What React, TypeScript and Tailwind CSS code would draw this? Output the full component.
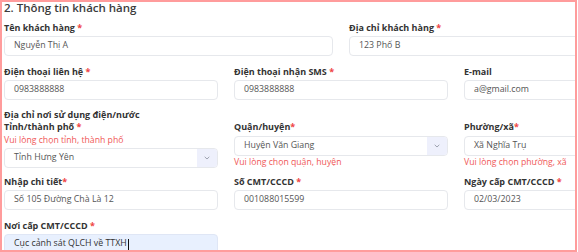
import React from "react";

const font = { fontFamily: '"Open Sans", "Noto Sans", sans-serif' };

function Label({ text, req = true, star = " *" }: { text: string; req?: boolean; star?: string }) {
  return (
    <div className="h-[12px] leading-[12px] text-[9px] font-bold text-[#333] whitespace-nowrap">
      {text}
      {req && <span className="text-[#ef4444]">{star}</span>}
    </div>
  );
}

function Input({ value, className = "" }: { value: string; className?: string }) {
  return (
    <div
      className={
        "h-[20px] rounded-[4px] border border-[#e6e8ec] bg-white pl-[9px] flex items-center text-[8.8px] text-[#555] whitespace-nowrap overflow-hidden " +
        className
      }
    >
      {value}
    </div>
  );
}

function Select({ value }: { value: string }) {
  return (
    <div className="h-[20px] rounded-[4px] border border-[#e6e8ec] bg-white flex items-stretch text-[8.8px] text-[#555] whitespace-nowrap overflow-hidden">
      <div className="flex-1 pl-[9px] flex items-center">{value}</div>
      <div className="w-[20px] bg-[#eef0fc] flex items-center justify-center">
        <svg width="6" height="4" viewBox="0 0 6 4" fill="none">
          <path d="M0.7 0.8 L3 3 L5.3 0.8" stroke="#8a8f9c" strokeWidth="0.8" />
        </svg>
      </div>
    </div>
  );
}

function Err({ text, className = "" }: { text: string; className?: string }) {
  return (
    <div className={"h-[12px] leading-[12px] text-[8.7px] text-[#f05858] whitespace-nowrap " + className}>
      {text}
    </div>
  );
}

export default function App() {
  return (
    <div style={font} className="w-[578px] h-[252px] bg-white">
      <div className="w-[577px] h-[252px] border-2 border-[#ff9c9c] overflow-hidden pl-[2px]">
        <div className="w-[674px] flex flex-col">
          <div className="leading-[15px] -mt-[2px] text-[11.5px] font-semibold text-[#3c3c3c] whitespace-nowrap">
            2. Thông tin khách hàng
          </div>

          <div className="mt-[7px] grid grid-cols-2 gap-x-[16px]">
            <div className="flex flex-col">
              <Label text="Tên khách hàng" />
              <Input value="Nguyễn Thị A" className="mt-[2px]" />
            </div>
            <div className="flex flex-col">
              <Label text="Địa chỉ khách hàng" />
              <Input value="123 Phố B" className="mt-[2px]" />
            </div>
          </div>

          <div className="mt-[10px] grid grid-cols-3 gap-x-[16px]">
            <div className="flex flex-col">
              <Label text="Điện thoại liên hệ" />
              <Input value="0983888888" className="mt-[2px]" />
            </div>
            <div className="flex flex-col">
              <Label text="Điện thoại nhận SMS" />
              <Input value="0983888888" className="mt-[2px]" />
            </div>
            <div className="flex flex-col">
              <Label text="E-mail" req={false} />
              <Input value="a@gmail.com" className="mt-[2px]" />
            </div>
          </div>

          <div className="mt-[9px]">
            <Label text="Địa chỉ nơi sử dụng điện/nước" req={false} />
          </div>

          <div className="grid grid-cols-3 gap-x-[16px]">
            <div className="flex flex-col">
              <Label text="Tỉnh/thành phố" />
              <Err text="Vui lòng chọn tỉnh, thành phố" className="mt-[1px]" />
              <div className="mt-[2px]">
                <Select value="Tỉnh Hưng Yên" />
              </div>
            </div>
            <div className="flex flex-col">
              <Label text="Quận/huyện" star="*" />
              <div className="mt-[3px]">
                <Select value="Huyện Văn Giang" />
              </div>
              <Err text="Vui lòng chọn quận, huyện" />
            </div>
            <div className="flex flex-col">
              <Label text="Phường/xã" star="*" />
              <div className="mt-[3px]">
                <Select value="Xã Nghĩa Trụ" />
              </div>
              <Err text="Vui lòng chọn phường, xã" />
            </div>
          </div>

          <div className="mt-[8px] grid grid-cols-3 gap-x-[16px]">
            <div className="flex flex-col">
              <Label text="Nhập chi tiết" star="*" />
              <Input value="Số 105 Đường Chà Là 12" className="mt-[2px]" />
            </div>
            <div className="flex flex-col">
              <Label text="Số CMT/CCCD" />
              <Input value="001088015599" className="mt-[2px]" />
            </div>
            <div className="flex flex-col">
              <Label text="Ngày cấp CMT/CCCD" />
              <Input value="02/03/2023" className="mt-[2px]" />
            </div>
          </div>

          <div className="mt-[10px] grid grid-cols-3 gap-x-[16px]">
            <div className="flex flex-col">
              <Label text="Nơi cấp CMT/CCCD" />
              <div className="mt-[2px] h-[20px] rounded-[4px] border border-[#dfe6f5] bg-[#e8f0fe] pl-[9px] flex items-center text-[8.8px] text-[#333] whitespace-nowrap">
                Cục cảnh sát QLCH về TTXH
                <span className="inline-block w-[1px] h-[11px] bg-[#111] ml-[1px]" />
              </div>
            </div>
          </div>
        </div>
      </div>
    </div>
  );
}
